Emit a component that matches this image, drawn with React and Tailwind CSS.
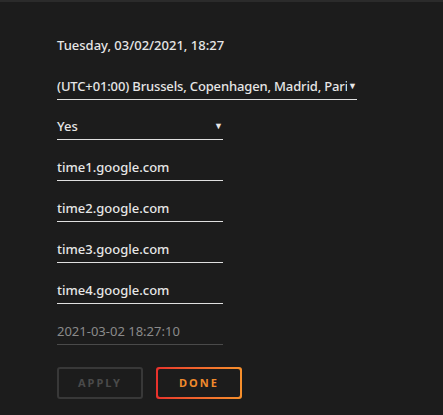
export default function App() {
  const fields = ["time1.google.com", "time2.google.com", "time3.google.com", "time4.google.com"];
  return (
    <div
      className="w-[443px] h-[415px] bg-[#1c1c1c] border-t-2 border-[#2b2b2b] text-[#e6e6e6] text-[13px] overflow-hidden"
      style={{ fontFamily: '"Noto Sans", "Liberation Sans", sans-serif' }}
    >
      <div className="pl-[57px] pt-[34px] flex flex-col">
        <div className="h-[18px] leading-[18px] font-medium">Tuesday, 03/02/2021, 18:27</div>

        {/* time zone select */}
        <div className="mt-[23px] w-[300px] h-[23px] flex items-start border-b border-[#e0e0e0]">
          <span className="leading-[18px] whitespace-nowrap overflow-hidden w-[294px] font-medium tracking-[-0.15px]">
            (UTC+01:00) Brussels, Copenhagen, Madrid, Paris
          </span>
          <span className="leading-[18px] text-[9px] ml-[1px]">▼</span>
        </div>

        {/* automatic sync select */}
        <div className="mt-[17px] w-[166px] h-[23px] flex items-start justify-between border-b border-[#e0e0e0]">
          <span className="leading-[18px] font-medium">Yes</span>
          <span className="leading-[18px] text-[9px]">▼</span>
        </div>

        {fields.map((f) => (
          <div key={f} className="mt-[18px] w-[166px] h-[23px] border-b border-[#e0e0e0]">
            <span className="leading-[18px] block font-medium">{f}</span>
          </div>
        ))}

        <div className="mt-[18px] w-[166px] h-[23px] border-b border-[#4a4a4a]">
          <span className="leading-[18px] block text-[#8a8a8a]">2021-03-02 18:27:10</span>
        </div>

        <div className="mt-[22px] flex gap-[13px]">
          <button className="w-[86px] h-[32px] rounded-[3px] border-2 border-[#383838] text-[#4a4a4a] text-[11px] font-bold tracking-[2px]">
            APPLY
          </button>
          <div className="w-[86px] h-[32px] rounded-[3px] p-[2px] bg-gradient-to-r from-[#e8302c] to-[#f7902c]">
            <button className="w-full h-full rounded-[2px] bg-[#1c1c1c] text-[#f08a2c] text-[11px] font-bold tracking-[2px]">
              DONE
            </button>
          </div>
        </div>
      </div>
    </div>
  );
}
